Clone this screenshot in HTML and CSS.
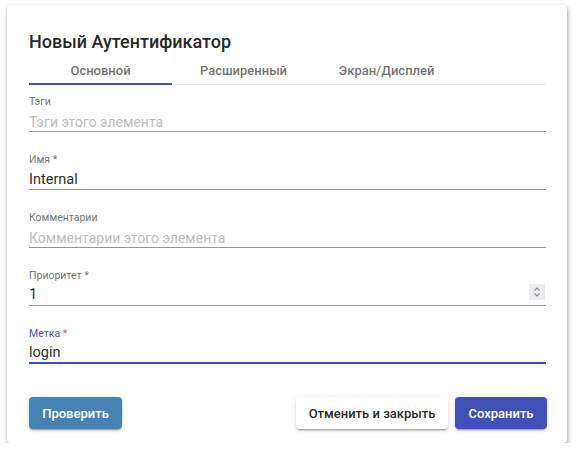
FILE: index.html
```html
<!DOCTYPE html>
<html lang="ru">
<head>
<meta charset="utf-8">
<link rel="stylesheet" href="styles.css">
</head>
<body>
<div class="dialog">
  <h2 class="title">Новый Аутентификатор</h2>
  <div class="tabs">
    <div class="tab active">Основной<span class="ink"></span></div>
    <div class="tab">Расширенный</div>
    <div class="tab">Экран/Дисплей</div>
  </div>
  <div class="fields">
    <div class="field">
      <div class="label">Тэги</div>
      <div class="input placeholder">Тэги этого элемента</div>
    </div>
    <div class="field">
      <div class="label">Имя *</div>
      <div class="input">Internal</div>
    </div>
    <div class="field">
      <div class="label">Комментарии</div>
      <div class="input placeholder">Комментарии этого элемента</div>
    </div>
    <div class="field">
      <div class="label">Приоритет *</div>
      <div class="input number"><span>1</span>
        <span class="spin"><svg width="16" height="16" viewBox="0 0 16 16"><path d="M5.5 6.5 L8 4 L10.5 6.5" fill="none" stroke="#8a8a92" stroke-width="1.1"/><path d="M5.5 9.5 L8 12 L10.5 9.5" fill="none" stroke="#8a8a92" stroke-width="1.1"/></svg></span>
      </div>
    </div>
    <div class="field focused">
      <div class="label">Метка <span class="req">*</span></div>
      <div class="input">login</div>
    </div>
  </div>
  <div class="actions">
    <button class="btn test">Проверить</button>
    <div class="right">
      <button class="btn cancel">Отменить и закрыть</button>
      <button class="btn save">Сохранить</button>
    </div>
  </div>
</div>
</body>
</html>
```
FILE: styles.css
```css
html, body {
  margin: 0;
  padding: 0;
  background: #fff;
}
body {
  font-family: Roboto, "Liberation Sans", Arial, sans-serif;
  padding: 5px 0 0 7px;
}
.dialog {
  width: 560px;
  height: 438px;
  box-sizing: border-box;
  padding: 25px 21px 0 22px;
  background: #fff;
  border-radius: 4px;
  box-shadow: 1px 3px 5px rgba(0,0,0,0.33), 0 0 3px rgba(0,0,0,0.08);
}
.title {
  margin: 0;
  font-size: 18px;
  line-height: 24px;
  font-weight: 500;
  color: rgba(0,0,0,0.87);
}
.tabs {
  display: flex;
  height: 31px;
  box-sizing: border-box;
  border-bottom: 1px solid #e0e0e0;
}
.tab {
  position: relative;
  width: 143px;
  text-align: center;
  padding-top: 9px;
  font-size: 13px;
  line-height: 16px;
  font-weight: 500;
  color: rgba(0,0,0,0.58);
}
.ink {
  position: absolute;
  left: 0;
  right: 0;
  bottom: -1px;
  height: 2px;
  background: #3f51b5;
}
.fields {
  padding-top: 10px;
}
.field {
  margin-bottom: 21px;
}
.field:last-child {
  margin-bottom: 0;
}
.label {
  font-size: 10.5px;
  line-height: 13px;
  color: rgba(0,0,0,0.6);
  margin-bottom: 4px;
}
.input {
  display: flex;
  align-items: center;
  justify-content: space-between;
  font-size: 14.5px;
  line-height: 18px;
  height: 19px;
  color: rgba(0,0,0,0.87);
  border-bottom: 1px solid #949494;
}
.input.placeholder {
  color: #bdbdbd;
  font-size: 14px;
}
.number {
  align-items: flex-start;
}
.spin {
  display: block;
  width: 16px;
  height: 16px;
  margin-top: -2px;
  margin-right: 1px;
  background: #ebebf0;
}
.spin svg {
  display: block;
}
.focused .label {
  color: #3f51b5;
}
.focused .req {
  color: #ff4081;
}
.focused .input {
  height: 18px;
  border-bottom: 2px solid #3f51b5;
}
.actions {
  display: flex;
  justify-content: space-between;
  margin-top: 33px;
  margin-right: -1px;
}
.right {
  display: flex;
  gap: 7px;
}
.btn {
  font-family: Roboto, "Liberation Sans", Arial, sans-serif;
  font-size: 13px;
  font-weight: 500;
  height: 32px;
  border: none;
  border-radius: 4px;
  padding: 0;
  white-space: nowrap;
  cursor: pointer;
  box-shadow: 0 3px 1px -2px rgba(0,0,0,.2), 0 2px 2px 0 rgba(0,0,0,.14), 0 1px 5px 0 rgba(0,0,0,.12);
}
.test {
  width: 93px;
  background: #4682b4;
  color: #fff;
}
.cancel {
  width: 152px;
  background: #fff;
  color: rgba(0,0,0,0.87);
}
.save {
  width: 92px;
  background: #3f51b5;
  color: #fff;
}
```
